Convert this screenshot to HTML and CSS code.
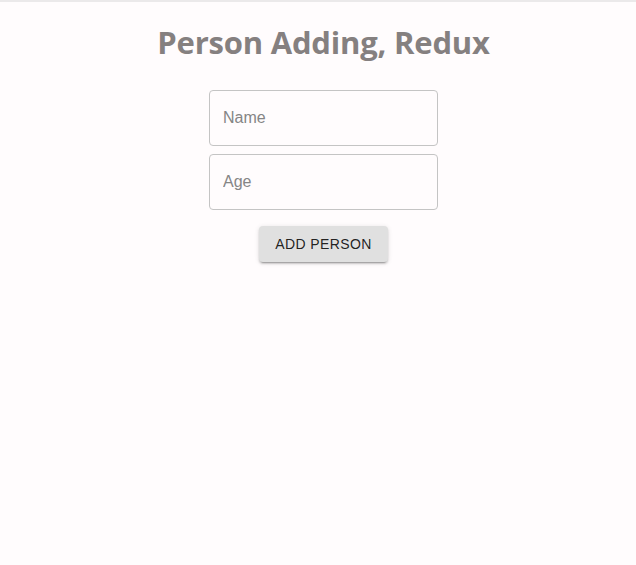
FILE: index.html
```html
<!DOCTYPE html>
<html>
<head>
<meta charset="utf-8">
<link rel="stylesheet" href="styles.css">
</head>
<body>
<div class="app">
  <h1 class="title">Person Adding, Redux</h1>
  <form class="form">
    <div class="field"><input class="input" type="text" placeholder="Name"></div>
    <div class="field"><input class="input" type="number" placeholder="Age"></div>
    <button class="btn" type="button">Add Person</button>
  </form>
</div>
</body>
</html>
```
FILE: styles.css
```css
html, body {
  margin: 0;
  padding: 0;
  background: #fffcfd;
  height: 100%;
}
.app {
  border-top: 2px solid #ebe9ea;
  display: flex;
  flex-direction: column;
  align-items: center;
  padding-left: 11px;
}
.title {
  font-family: "Open Sans", sans-serif;
  font-weight: 700;
  font-size: 31px;
  color: #858080;
  margin: 20px 0 0;
  line-height: 40px;
  letter-spacing: -0.2px;
}
.form {
  margin-top: 28px;
  display: flex;
  flex-direction: column;
  align-items: center;
  gap: 8px;
}
.field {
  width: 229px;
}
.input {
  box-sizing: border-box;
  width: 100%;
  height: 56px;
  border: 1px solid #c4c4c4;
  border-radius: 4px;
  background: #fffcfd;
  padding: 0 13px;
  font-family: "Liberation Sans", Arial, sans-serif;
  font-size: 16px;
  color: #333;
  outline: none;
}
.input::placeholder {
  color: #858585;
  opacity: 1;
}
.input::-webkit-outer-spin-button,
.input::-webkit-inner-spin-button {
  -webkit-appearance: none;
  margin: 0;
}
.btn {
  margin-top: 8px;
  width: 129px;
  height: 36px;
  border: none;
  border-radius: 4px;
  background: #e0e0e0;
  box-shadow: 0 3px 1px -2px rgba(0,0,0,0.2), 0 2px 2px 0 rgba(0,0,0,0.14), 0 1px 5px 0 rgba(0,0,0,0.12);
  font-family: "Liberation Sans", Arial, sans-serif;
  font-size: 14px;
  font-weight: 400;
  letter-spacing: 0.4px;
  text-transform: uppercase;
  color: rgba(0,0,0,0.87);
  padding: 0 12px;
}
```
